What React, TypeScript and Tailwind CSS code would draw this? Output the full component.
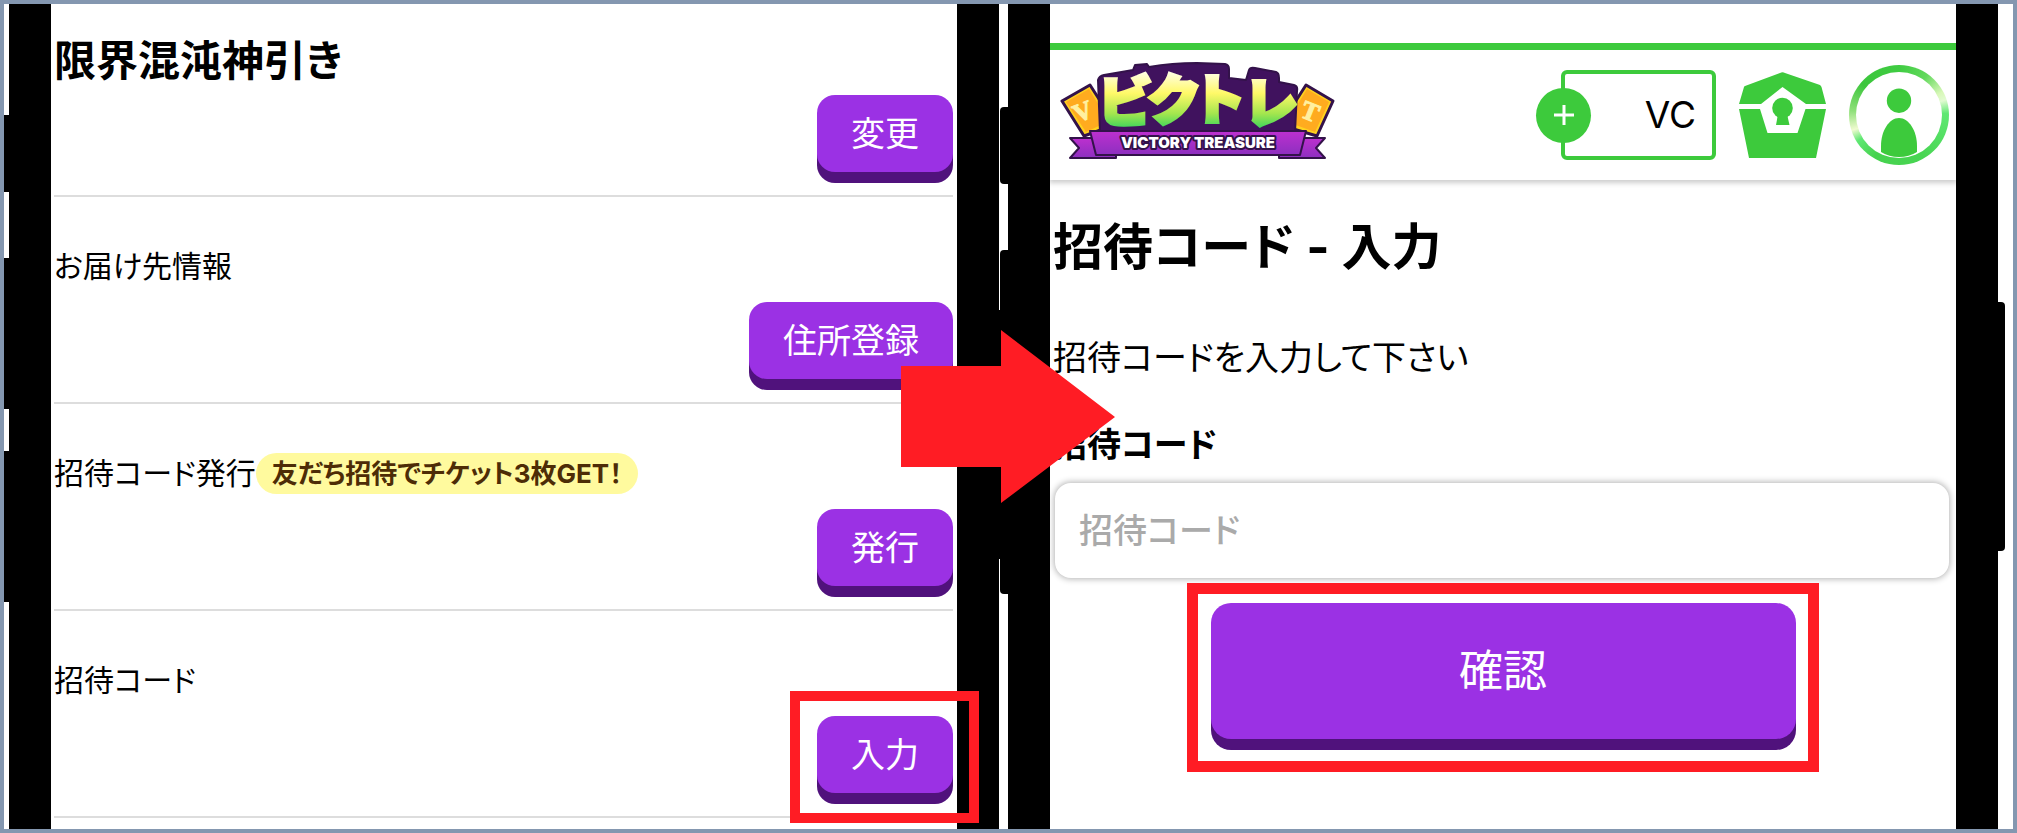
import type { ReactNode } from 'react'
import clsx from 'clsx'

function SideKeys({ className }: { className: string }) {
  return (
    <div className={clsx('absolute inset-x-0', className)} aria-hidden="true">
      <div className="absolute -left-2 top-0 flex flex-col">
        <span className="h-[77px] w-3 rounded-l-sm bg-black" />
        <span className="mt-[66px] h-[151px] w-3 rounded-l-sm bg-black" />
        <span className="mt-[42px] h-[151px] w-3 rounded-l-sm bg-black" />
      </div>
      <span className="absolute -right-[7px] top-[195px] h-[249px] w-3 rounded-r-sm bg-black" />
    </div>
  )
}

function Phone({ keys, children }: { keys: string; children: ReactNode }) {
  return (
    <div className="relative flex min-w-0 flex-1 bg-black px-[42px]">
      <SideKeys className={keys} />
      <div className="relative min-w-0 flex-1 bg-white">{children}</div>
    </div>
  )
}

function ActionButton({ children, marked }: { children: ReactNode; marked?: boolean }) {
  return (
    <div className="relative mb-[23px] self-end">
      <button
        type="button"
        className="block rounded-[18px] bg-[#9b31e4] px-[34px] py-4 text-[34px] leading-[45px] text-white shadow-[0_11px_0_#50127c]"
      >
        {children}
      </button>
      {marked && (
        <span className="pointer-events-none absolute -bottom-[30px] -left-[27px] -right-[26px] -top-[25px] z-10 border-[10px] border-[#ff1c24]" />
      )}
    </div>
  )
}

function SettingRow({ label, badge, action, marked }: { label: string; badge?: string; action: string; marked?: boolean }) {
  return (
    <section className="flex flex-col border-b-2 border-[#dddddd] pt-[49px]">
      <div className="mb-[15px] flex items-center text-[30px] leading-[41px]">
        <p>{label}</p>
        {badge && (
          <span className="rounded-full bg-[#fffa9e] px-4 text-[26px] font-bold text-[#4d2c06]">{badge}</span>
        )}
      </div>
      <ActionButton marked={marked}>{action}</ActionButton>
    </section>
  )
}

function Logo() {
  return (
    <svg viewBox="0 -8 275 123" className="h-[123px] w-[275px]" role="img" aria-label="ビクトレ VICTORY TREASURE">
      <defs>
        <linearGradient id="kana" gradientUnits="userSpaceOnUse" x1="0" y1="8" x2="0" y2="66">
          <stop offset="0" stopColor="#fffef0" />
          <stop offset="0.4" stopColor="#fff968" />
          <stop offset="0.75" stopColor="#a4e64e" />
          <stop offset="1" stopColor="#3fd45c" />
        </linearGradient>
        <linearGradient id="ribbon" x1="0" y1="0" x2="0" y2="1">
          <stop offset="0" stopColor="#bd30cf" />
          <stop offset="1" stopColor="#8d2fc0" />
        </linearGradient>
      </defs>
      <g stroke="#33124a" strokeWidth="3" strokeLinejoin="round">
        <path d="M2 39 30 23 46 48 46 66 24 74Z" fill="#ffd21f" />
        <path d="M273 39 246 23 230 48 230 66 257 74Z" fill="#ffd21f" />
      </g>
      <path d="M6 40 29 27 43 50 43 62 26 70Z" fill="#ffab1f" />
      <path d="M269 40 247 27 233 50 233 62 255 70Z" fill="#ffab1f" />
      <g fill="#fff0a0" stroke="#fff0a0" fontFamily="Liberation Serif, serif" fontWeight="700" fontSize="26">
        <text x="23" y="58" textAnchor="middle" transform="rotate(-22 23 50)">V</text>
        <text x="250" y="58" textAnchor="middle" transform="rotate(22 250 50)">T</text>
      </g>
      <g fill="url(#ribbon)" stroke="#33124a" strokeWidth="2" strokeLinejoin="round">
        <path d="M10 76H56V96H10L19 86Z" />
        <path d="M265 76H219V96H265L256 86Z" />
      </g>
      <path
        d="M38 18Q39 14 44 13L73 8 75 3 87 2 89 5Q112 1 137 1L165 2Q169 3 169 7V16L186 18 189 8Q190 5 195 6L216 10Q219 11 219 16V20L234 23Q238 24 237 29L235 70H40Z"
        fill="#40125e"
        stroke="#33124a"
        strokeWidth="2"
        strokeLinejoin="round"
      />
      <g
        fill="url(#kana)"
        stroke="url(#kana)"
        strokeWidth="4"
        strokeLinejoin="miter"
        fontFamily="Noto Sans CJK JP, sans-serif"
        fontWeight="900"
        fontSize="54"
        textAnchor="middle"
      >
        <text x="64" y="60">ビ</text>
        <text x="113" y="58">ク</text>
        <text x="160" y="58">ト</text>
        <text x="211" y="61">レ</text>
      </g>
      <path d="M30 69H246L240 93H36Z" fill="url(#ribbon)" stroke="#33124a" strokeWidth="2" strokeLinejoin="round" />
      <text
        x="138"
        y="86"
        textAnchor="middle"
        fill="#ffffff"
        stroke="#33124a"
        strokeWidth="4"
        strokeLinejoin="round"
        paintOrder="stroke"
        fontFamily="Inter, sans-serif"
        fontWeight="900"
        fontSize="15"
      >
        VICTORY TREASURE
      </text>
    </svg>
  )
}

function ChestIcon() {
  return (
    <svg viewBox="0 0 87 86" className="h-[86px] w-[87px]" fill="#3dca3c" aria-hidden="true">
      <path d="M41 1Q43.500 -.5 46 1L81 13Q82 14 82.500 15L87 32H67L43.500 15 22 32H0L5 15Q5.500 14 6 14Z" />
      <path d="M0 37H21L28.500 61H58.500L66.500 37H87L77 86H10Z" />
      <circle cx="43.500" cy="36" r="10.300" />
      <path d="M39 42H48L50.500 53H37Z" />
    </svg>
  )
}

function AccountIcon() {
  return (
    <span className="block size-[100px] rounded-full bg-[conic-gradient(#3fcc42_0deg,#62d95c_35deg,#d8f8b8_62deg,#e2fbd2_72deg,#5fe873_88deg,#48d552_150deg,#46d24e_210deg,#5fe873_238deg,#f0fbd0_252deg,#8fe07a_275deg,#3cc63c_310deg,#3fcc42_360deg)]">
      <svg viewBox="0 0 100 100" className="size-full" aria-hidden="true">
        <circle cx="50" cy="50" r="43" fill="#ffffff" />
        <circle cx="50" cy="35.700" r="12.200" fill="#3dca3c" />
        <path d="M32 87V81C32 66 40 53 50 53S68 66 68 81V87Q60 92 50 92T32 87Z" fill="#3dca3c" />
      </svg>
    </span>
  )
}

function Header() {
  return (
    <header className="shadow-[0_2px_5px_1px_rgba(0,0,0,0.2)]">
      <div className="h-[39px]" />
      <div className="h-[7px] bg-[#3dca3c]" />
      <div className="flex h-[130px] items-center justify-between pl-[10px] pr-[7px]">
        <a href="#">
          <Logo />
        </a>
        <div className="flex items-center gap-[23px]">
          <div className="flex items-center">
            <button
              type="button"
              aria-label="VCを追加"
              className="z-10 -mr-[30px] flex size-[55px] items-center justify-center rounded-full bg-[#3dca3c]"
            >
              <svg viewBox="0 0 20 20" className="size-5" stroke="#ffffff" strokeWidth="3" aria-hidden="true">
                <path d="M10 0V20M0 10H20" />
              </svg>
            </button>
            <div className="flex h-[90px] w-[155px] items-center justify-end rounded-md border-4 border-[#3dca3c] pr-4 text-[37px]">
              VC
            </div>
          </div>
          <button type="button" aria-label="宝箱">
            <ChestIcon />
          </button>
          <button type="button" aria-label="アカウント">
            <AccountIcon />
          </button>
        </div>
      </div>
    </header>
  )
}

function Arrow() {
  return (
    <svg viewBox="0 0 214 173" className="absolute -left-[149px] top-[326px] z-20 h-[173px] w-[214px]" aria-hidden="true">
      <path d="M0 36H100V0L214 87 100 173V137H0Z" fill="#ff1c24" />
    </svg>
  )
}

export default function App() {
  return (
    <div
      lang="ja"
      className="flex min-h-screen gap-[9px] overflow-hidden border-4 border-[#8497b0] bg-white pl-[5px] pr-[15px] font-[Inter,'Noto_Sans_CJK_JP',sans-serif] text-black [font-feature-settings:'palt']"
    >
      <Phone keys="top-[111px]">
        <main className="pl-[3px] pr-1">
          <section className="flex flex-col border-b-2 border-[#dddddd] pt-[27px]">
            <h1 className="mb-1 text-[42px] font-bold leading-[60px]">限界混沌神引き</h1>
            <ActionButton>変更</ActionButton>
          </section>
          <SettingRow label="お届け先情報" action="住所登録" />
          <SettingRow label="招待コード発行" badge="友だち招待でチケット3枚GET！" action="発行" />
          <SettingRow label="招待コード" action="入力" marked />
        </main>
      </Phone>

      <Phone keys="top-[103px]">
        <Header />
        <form className="flex flex-col px-[3px] pt-[37px]" onSubmit={(e) => e.preventDefault()}>
          <h2 className="text-[50px] font-bold leading-[60px]">招待コード - 入力</h2>
          <p className="mt-[59px] text-[34px] leading-[44px]">招待コードを入力して下さい</p>
          <label htmlFor="invite-code" className="mt-[43px] text-[34px] font-bold leading-[44px]">
            招待コード
          </label>
          <input
            id="invite-code"
            type="text"
            placeholder="招待コード"
            className="ml-[2px] mr-1 mt-4 h-[95px] rounded-2xl bg-white px-6 text-[34px] font-medium shadow-[0_0_6px_1px_rgba(0,0,0,0.3)] outline-none placeholder:text-[#aaaaaa]"
          />
          <div className="relative mt-[25px] w-[65%] self-center">
            <button
              type="submit"
              className="block h-[136px] w-full rounded-[20px] bg-[#9b31e4] text-[44px] text-white shadow-[0_11px_0_#50127c]"
            >
              確認
            </button>
            <span className="pointer-events-none absolute -bottom-[33px] -left-6 -right-[23px] -top-5 border-[11px] border-[#ff1c24]" />
          </div>
        </form>
        <Arrow />
      </Phone>
    </div>
  )
}
